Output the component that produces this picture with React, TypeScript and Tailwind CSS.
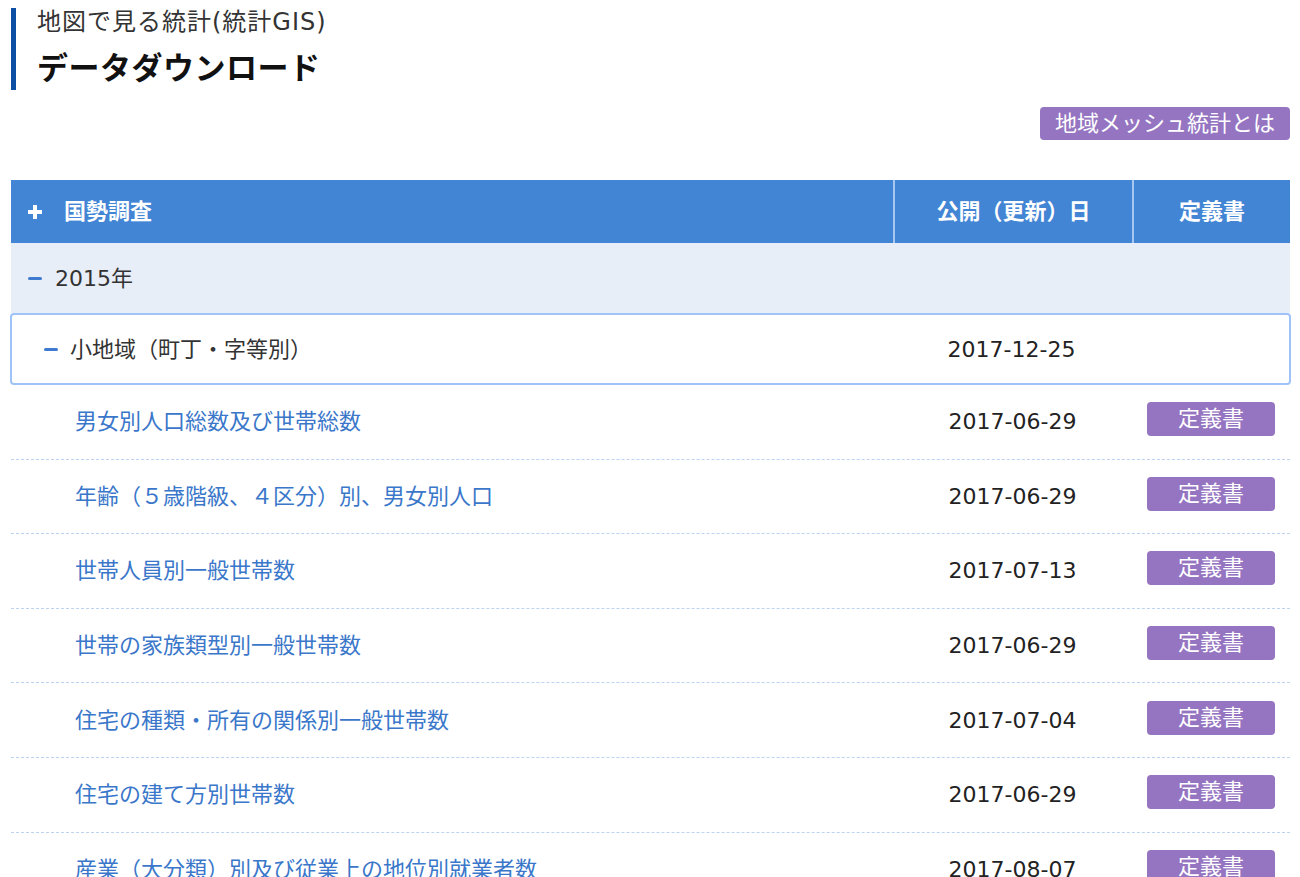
import React from 'react';

interface DataRow {
  name: string;
  date: string;
}

const rows: DataRow[] = [
  { name: '男女別人口総数及び世帯総数', date: '2017-06-29' },
  { name: '年齢（５歳階級、４区分）別、男女別人口', date: '2017-06-29' },
  { name: '世帯人員別一般世帯数', date: '2017-07-13' },
  { name: '世帯の家族類型別一般世帯数', date: '2017-06-29' },
  { name: '住宅の種類・所有の関係別一般世帯数', date: '2017-07-04' },
  { name: '住宅の建て方別世帯数', date: '2017-06-29' },
  { name: '産業（大分類）別及び従業上の地位別就業者数', date: '2017-08-07' },
  { name: '職業（大分類）別就業者数', date: '2017-08-07' },
];

const Minus = () => <span className="inline-block w-[14px] h-[3px] rounded-sm bg-[#3d7ad0]" />;

const PlusIcon = () => (
  <svg width="16" height="16" viewBox="0 0 16 16" aria-hidden="true">
    <rect x="1" y="6" width="14" height="4" fill="#fff" />
    <rect x="6" y="1" width="4" height="14" fill="#fff" />
  </svg>
);

export default function App() {
  return (
    <div
      className="min-h-screen bg-white text-[#333] text-[22px] pl-[11px] pr-[10px] pt-[8px]"
      style={{ fontFamily: '"DejaVu Sans", "Noto Sans CJK JP", sans-serif' }}
    >
      {/* page title */}
      <div className="border-l-[5px] border-[#0e4fa6] pl-[21px] h-[82px] flex flex-col">
        <p className="text-[24px] leading-[30px] tracking-[1px] text-[#333] mt-[-1px]">地図で見る統計(統計GIS)</p>
        <h1 className="text-[31px] leading-[40px] tracking-[0.5px] font-bold text-[#111] mt-[11px]">データダウンロード</h1>
      </div>

      <div className="flex justify-end mt-[17px]">
        <a className="h-[33px] px-[15px] flex items-center rounded-[4px] bg-[#9575c1] text-white text-[22px] leading-none cursor-pointer">
          地域メッシュ統計とは
        </a>
      </div>

      {/* table */}
      <div className="mt-[40px] w-[1279px]">
        <div className="grid grid-cols-[1fr_239px_158px] h-[63px] bg-[#4285d5] text-white font-bold">
          <div className="flex items-center pl-[16px] gap-[21px]">
            <PlusIcon />
            <span>国勢調査</span>
          </div>
          <div className="flex items-center justify-center border-l-2 border-[#a8c7f0]">公開（更新）日</div>
          <div className="flex items-center justify-center border-l-2 border-[#a8c7f0]">定義書</div>
        </div>

        <div className="h-[70px] bg-[#e8eef8] flex items-center pl-[17px] gap-[13px]">
          <Minus />
          <span>2015年</span>
        </div>

        <div className="grid grid-cols-[1fr_239px_158px] h-[72px] border-2 border-[#9fc3f8] rounded-[4px] -mx-[1px]">
          <div className="flex items-center pl-[32px] gap-[12px]">
            <Minus />
            <span>小地域（町丁・字等別）</span>
          </div>
          <div className="flex items-center justify-center text-[#222]">2017-12-25</div>
          <div />
        </div>

        {rows.map((row) => (
          <div
            key={row.name}
            className="grid grid-cols-[1fr_239px_158px] h-[74.6px] border-b border-dashed border-[#bcd3f2]"
          >
            <div className="flex items-center pl-[64px]">
              <a className="text-[#3a77ca] cursor-pointer">{row.name}</a>
            </div>
            <div className="flex items-center justify-center text-[#222]">{row.date}</div>
            <div className="flex items-center justify-center">
              <a className="w-[128px] h-[34px] mb-[5px] flex items-center justify-center rounded-[4px] bg-[#9575c1] text-white leading-none cursor-pointer">
                定義書
              </a>
            </div>
          </div>
        ))}
      </div>
    </div>
  );
}
